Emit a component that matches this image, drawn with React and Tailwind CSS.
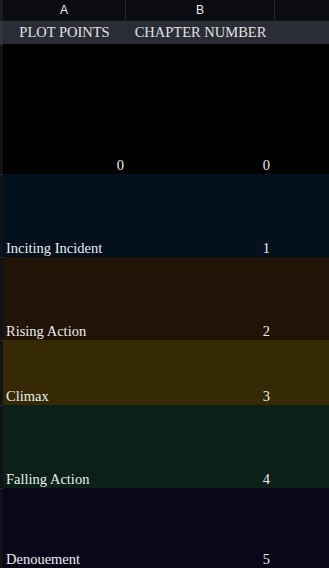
import React from "react";

const rows = [
  { label: "0", value: "0", h: "h-[130px]", bg: "bg-black", labelRight: true },
  { label: "Inciting Incident", value: "1", h: "h-[83px]", bg: "bg-[#03111f]" },
  { label: "Rising Action", value: "2", h: "h-[83px]", bg: "bg-[#211306]" },
  { label: "Climax", value: "3", h: "h-[65px]", bg: "bg-[#352a04]" },
  { label: "Falling Action", value: "4", h: "h-[83px]", bg: "bg-[#0b2117]" },
  { label: "Denouement", value: "5", h: "h-[80px]", bg: "bg-[#090818]" },
];

const App = () => {
  return (
    <div className="w-[329px] h-[568px] overflow-hidden bg-[#090818] text-[#ececec]">
      {/* column letters */}
      <div className="grid grid-cols-[3px_123px_149px_1fr] h-[20px] bg-[#0b0c10] font-[Liberation_Sans,sans-serif] text-[12px]">
        <div className="bg-[#1c1e23]"></div>
        <div className="flex items-center justify-center border-r border-[#26282d]">A</div>
        <div className="flex items-center justify-center border-r border-[#26282d]">B</div>
        <div></div>
      </div>

      {/* header row */}
      <div className="grid grid-cols-[3px_123px_149px_1fr] h-[24px] bg-[#2b2d36] border-t border-[#16171b] font-[Liberation_Serif,serif] text-[14.5px] text-[#e2e2e2]">
        <div className="bg-[#33353d]"></div>
        <div className="flex items-center justify-center">PLOT POINTS</div>
        <div className="flex items-center justify-center">CHAPTER NUMBER</div>
        <div></div>
      </div>

      {/* data rows */}
      {rows.map((r) => (
        <div
          key={r.value}
          className={`grid grid-cols-[3px_123px_149px_1fr] ${r.h} ${r.bg} font-[Liberation_Serif,serif] text-[14.5px] leading-[17px]`}
        >
          <div className="bg-[#101216] border-t border-[#2a2c31]"></div>
          <div className={`flex items-end ${r.labelRight ? "justify-end pr-[2px]" : "pl-[3px]"}`}>
            {r.label}
          </div>
          <div className="flex items-end justify-end pr-[5px]">{r.value}</div>
          <div></div>
        </div>
      ))}
    </div>
  );
};

export default App;
